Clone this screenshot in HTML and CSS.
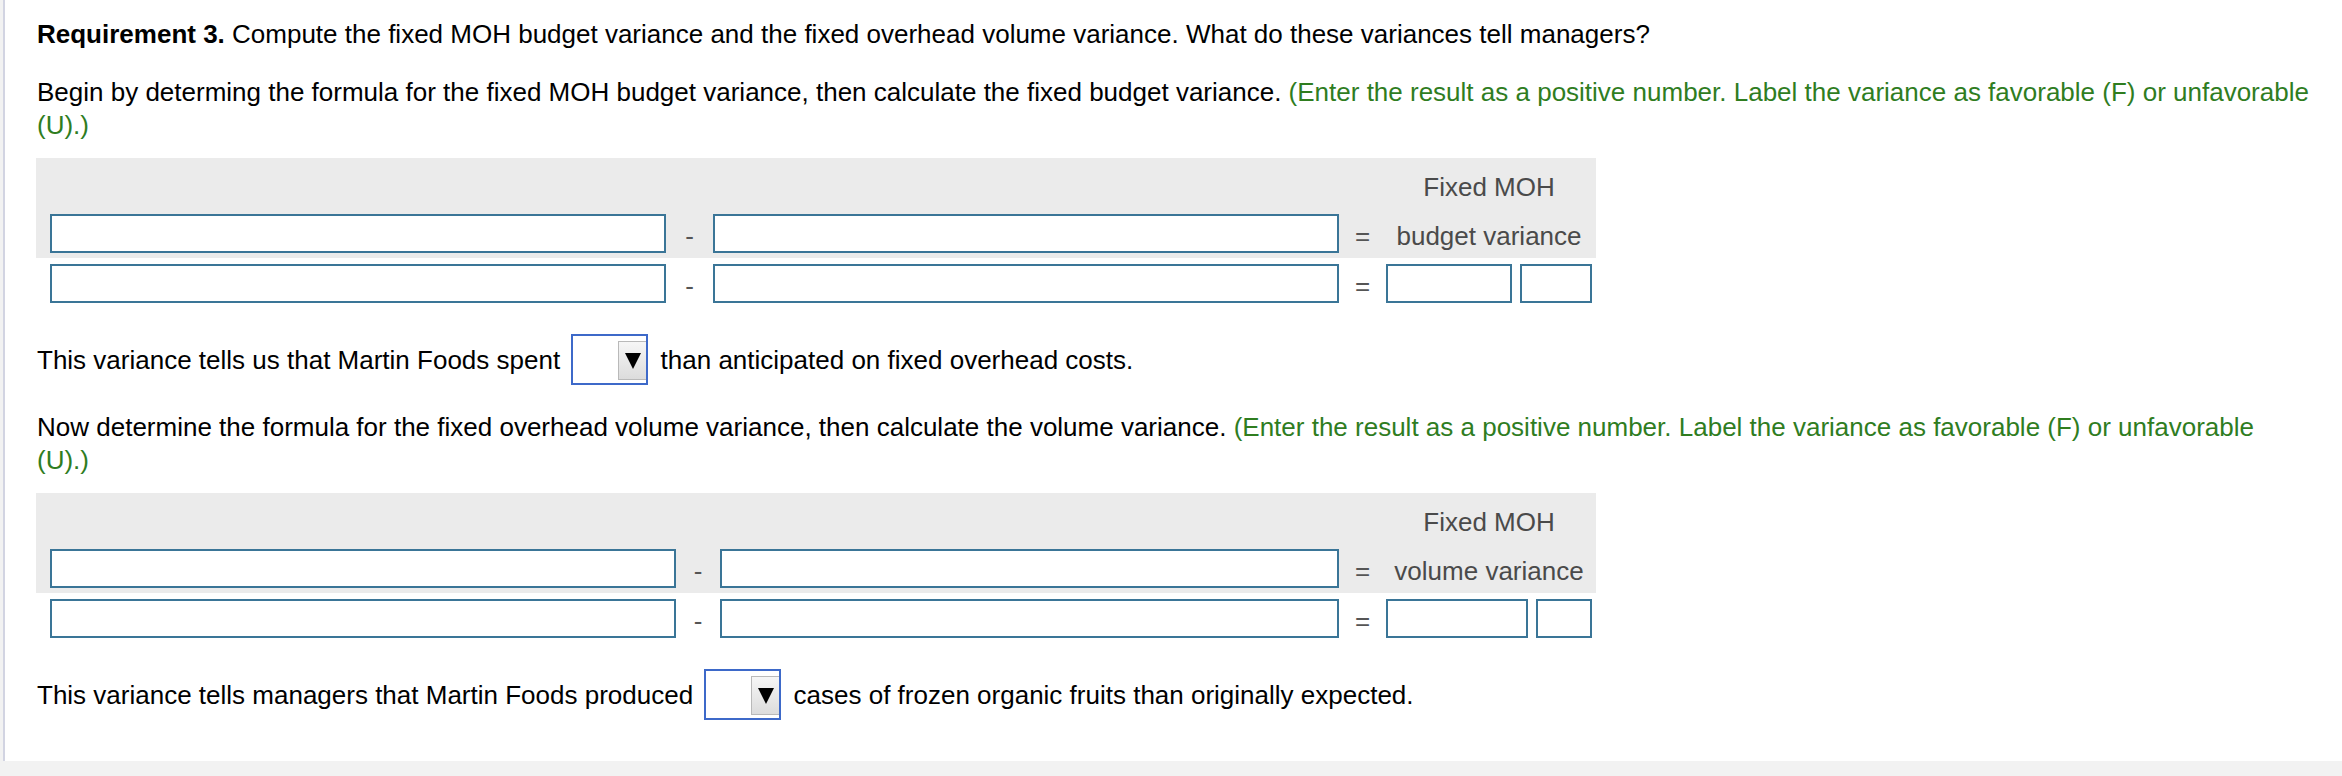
FILE: index.html
```html
<!DOCTYPE html>
<html lang="en">
<head>
<meta charset="utf-8">
<title>Requirement 3</title>
<link rel="stylesheet" href="styles.css">
</head>
<body>
<div class="page">
  <p class="req"><b>Requirement 3.</b> Compute the fixed MOH budget variance and the fixed overhead volume variance. What do these variances tell managers?</p>
  <p class="intro">Begin by determing the formula for the fixed MOH budget variance, then calculate the fixed budget variance. <span class="hint">(Enter the result as a positive number. Label the variance as favorable (F) or unfavorable (U).)</span></p>

  <div class="formula budget">
    <div class="shade">
      <div class="fgrid head"><span class="label col5">Fixed MOH</span></div>
      <div class="fgrid row">
        <input class="box" type="text">
        <span class="op">-</span>
        <input class="box" type="text">
        <span class="op">=</span>
        <span class="label">budget variance</span>
      </div>
    </div>
    <div class="fgrid row calc">
      <input class="box" type="text">
      <span class="op">-</span>
      <input class="box" type="text">
      <span class="op">=</span>
      <span class="result"><input class="box amt" type="text"><input class="box fu" type="text"></span>
    </div>
  </div>

  <p class="answer">This variance tells us that Martin Foods spent <span class="dropdown"><span class="dd-btn"><svg viewBox="0 0 16 18" width="16" height="18"><polygon points="0,1 16,1 8,17" fill="#000"/></svg></span></span> than anticipated on fixed overhead costs.</p>

  <p class="intro">Now determine the formula for the fixed overhead volume variance, then calculate the volume variance. <span class="hint">(Enter the result as a positive number. Label the variance as favorable (F) or unfavorable (U).)</span></p>

  <div class="formula volume">
    <div class="shade">
      <div class="fgrid head"><span class="label col5">Fixed MOH</span></div>
      <div class="fgrid row">
        <input class="box" type="text">
        <span class="op">-</span>
        <input class="box" type="text">
        <span class="op">=</span>
        <span class="label">volume variance</span>
      </div>
    </div>
    <div class="fgrid row calc">
      <input class="box" type="text">
      <span class="op">-</span>
      <input class="box" type="text">
      <span class="op">=</span>
      <span class="result"><input class="box amt" type="text"><input class="box fu" type="text"></span>
    </div>
  </div>

  <p class="answer last">This variance tells managers that Martin Foods produced <span class="dropdown"><span class="dd-btn"><svg viewBox="0 0 16 18" width="16" height="18"><polygon points="0,1 16,1 8,17" fill="#000"/></svg></span></span> cases of frozen organic fruits than originally expected.</p>
</div>
</body>
</html>
```

FILE: styles.css
```css
html, body {
  margin: 0;
  padding: 0;
}

body {
  background: #f2f2f2;
  font-family: "Liberation Sans", Arial, sans-serif;
  font-size: 26px;
  line-height: 33px;
  color: #000;
}

.page {
  margin-left: 3px;
  border-left: 2px solid #d2d4e2;
  background: #fff;
  padding: 18px 32px 41px 32px;
}

p {
  margin: 0;
}

.req {
  margin-bottom: 25px;
}

.intro {
  margin-bottom: 16px;
}

.hint {
  color: #2f7d1f;
}

.formula {
  width: 1560px;
  margin-left: -1px;
}

.shade {
  background: #ebebeb;
  height: 100px;
}

.fgrid {
  display: grid;
  padding: 0 4px 0 14px;
}

.budget .fgrid {
  grid-template-columns: 616px 47px 626px 47px 206px;
}

.volume .fgrid {
  grid-template-columns: 626px 44px 619px 47px 206px;
}

.head {
  height: 51px;
  padding-top: 13px;
  box-sizing: border-box;
}

.col5 {
  grid-column: 5;
}

.row {
  height: 49px;
  padding-top: 5px;
  padding-bottom: 5px;
  box-sizing: border-box;
}

.row.calc {
  height: 50px;
  padding-top: 6px;
  padding-bottom: 5px;
}

.box {
  display: block;
  box-sizing: border-box;
  width: 100%;
  height: 39px;
  margin: 0;
  padding: 0 6px;
  border: 2px solid #3a7597;
  border-radius: 0;
  background: #fff;
  font: inherit;
  outline: none;
}

.op {
  align-self: end;
  text-align: center;
  color: #555;
}

.label {
  align-self: end;
  text-align: center;
  color: #4a4a4a;
  white-space: nowrap;
}

.head .label {
  align-self: start;
}

.result {
  display: flex;
  gap: 8px;
}

.budget .amt { width: 126px; }
.budget .fu { width: 72px; }
.volume .amt { width: 142px; }
.volume .fu { width: 56px; }

.answer {
  margin-top: 26px;
  margin-bottom: 26px;
}

.answer.last {
  margin-bottom: 0;
}

.dropdown {
  display: inline-block;
  box-sizing: border-box;
  width: 77px;
  height: 51px;
  border: 2px solid #3d69c9;
  background: #fff;
  padding: 5px 0 3px 0;
  overflow: hidden;
  vertical-align: -16px;
  margin: 0 5px 0 4px;
}

.dd-btn {
  display: flex;
  align-items: center;
  justify-content: center;
  box-sizing: border-box;
  width: 28px;
  height: 39px;
  margin-left: auto;
  background: linear-gradient(#f6f6f6, #dcdcdc);
  border: 1px solid #b9b9b9;
  border-right: 0;
}

.dd-btn svg {
  display: block;
}
```
